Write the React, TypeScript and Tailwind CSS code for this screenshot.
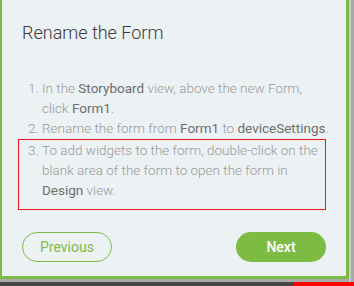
import React from "react";

export default function App() {
  const B = ({ children }: { children: React.ReactNode }) => (
    <span className="font-normal text-[#6e6e6e]">{children}</span>
  );
  return (
    <div
      className="w-[354px] h-[286px] overflow-hidden bg-[#ababab] flex flex-col"
      style={{ fontFamily: "Roboto, 'Noto Sans', sans-serif" }}
    >
      <div className="flex h-[282px]">
        <div className="w-[349px] h-[279px] bg-[#ecf1f4] border-l-[2px] border-r-[3px] border-b-[3px] border-[#7cbc45] rounded-br-[3px] px-[20px] pt-[20px] flex flex-col">
          <div className="text-[18px] leading-[26px] font-light text-[#3a3a3a]">Rename the Form</div>
          <div className="mt-[32px] ml-[-4px] w-[316px] text-[13.5px] leading-[20px] font-light text-[#9a9a9a]">
            <div className="flex pl-[10px]">
              <span className="w-[14px] shrink-0">1.</span>
              <span>
                In the <B>Storyboard</B> view, above the new Form,
                <br />
                click <B>Form1</B>.
              </span>
            </div>
            <div className="flex pl-[10px]">
              <span className="w-[14px] shrink-0">2.</span>
              <span>
                Rename the form from <B>Form1</B> to <B>deviceSettings</B>.
              </span>
            </div>
            <div className="flex pl-[9px] mt-[1px] border border-[#e8141c] w-[308px] pb-[9px]">
              <span className="w-[14px] shrink-0">3.</span>
              <span className="whitespace-nowrap">
                To add widgets to the form, double-click on the
                <br />
                blank area of the form to open the form in
                <br />
                <B>Design</B> view.
              </span>
            </div>
          </div>
          <div className="mt-[22px] flex justify-between w-[304px]">
            <div className="w-[90px] h-[30px] rounded-full border border-[#7cbc45] flex items-center justify-center text-[14px] text-[#7cbc45] font-normal">
              Previous
            </div>
            <div className="w-[90px] h-[30px] rounded-full bg-[#7cbc45] flex items-center justify-center text-[14px] text-white font-medium">
              Next
            </div>
          </div>
        </div>
        <div className="w-[2px] h-full bg-[#c9c9c9]" />
        <div className="flex-1 h-full bg-[#a9a9a9]" />
      </div>
      <div className="flex h-[4px]">
        <div className="w-[293px] bg-[#454545]" />
        <div className="flex-1 bg-[#ff0000]" />
      </div>
    </div>
  );
}
